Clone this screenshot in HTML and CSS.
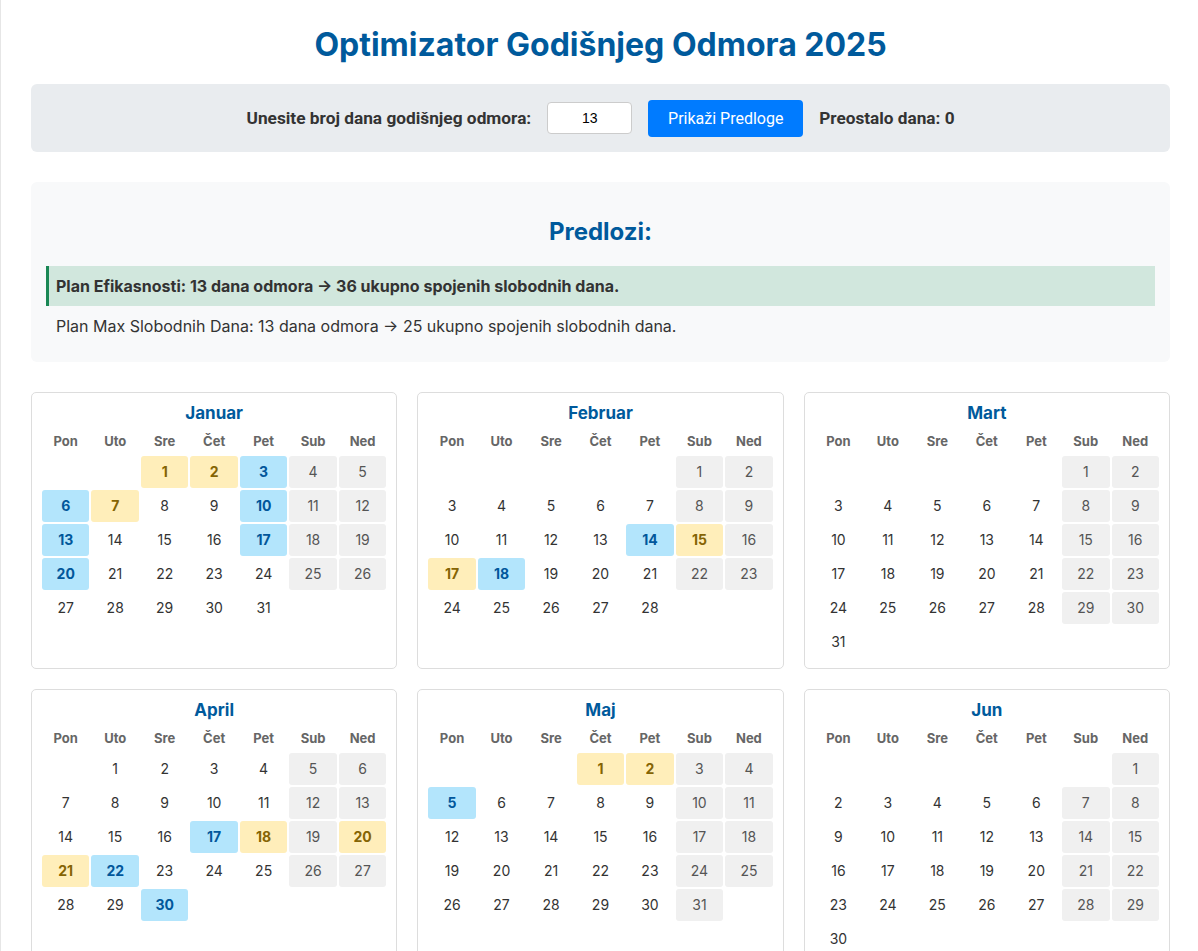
FILE: index.html
```html
<!DOCTYPE html>
<html lang="sr">
<head>
<meta charset="utf-8">
<title>Optimizator Godišnjeg Odmora 2025</title>
<link rel="stylesheet" href="styles.css">
</head>
<body>
<div class="page">
  <h1 class="title">Optimizator Godišnjeg Odmora 2025</h1>
  <div class="controls">
    <label class="controls-label" for="days">Unesite broj dana godišnjeg odmora:</label>
    <input id="days" class="days-input" type="number" value="13">
    <button class="btn">Prikaži Predloge</button>
    <span class="remaining">Preostalo dana: 0</span>
  </div>
  <div class="suggestions">
    <h2 class="suggestions-title">Predlozi:</h2>
    <p class="plan plan-active">Plan Efikasnosti: 13 dana odmora → 36 ukupno spojenih slobodnih dana.</p>
    <p class="plan">Plan Max Slobodnih Dana: 13 dana odmora → 25 ukupno spojenih slobodnih dana.</p>
  </div>
  <div class="calendars" id="calendars"></div>
</div>
<script src="script.js"></script>
</body>
</html>
```
FILE: styles.css
```css
* { box-sizing: border-box; }
body {
  margin: 0;
  font-family: Inter, "Noto Sans", sans-serif;
  color: #333;
  background: #fff;
  border-left: 1px solid #e6e6e6;
  min-height: 100vh;
}
.page {
  padding: 25px 28px 20px 30px;
}
.title {
  margin: 0 0 20px;
  text-align: center;
  font-size: 32px;
  line-height: 39px;
  font-weight: 700;
  color: #005a9c;
}
.controls {
  display: flex;
  justify-content: center;
  align-items: center;
  gap: 16px;
  background: #e9ecef;
  border-radius: 6px;
  padding: 15px;
  min-height: 68px;
  font-family: Roboto, "Liberation Sans", sans-serif;
}
.controls-label {
  font-weight: 700;
  font-size: 17.3px;
  color: #333;
}
.days-input {
  width: 85px;
  height: 32px;
  border: 1px solid #ccc;
  border-radius: 4px;
  text-align: center;
  font-family: "Liberation Sans", Arial, sans-serif;
  font-size: 14px;
  color: #000;
  background: #fff;
  -moz-appearance: textfield;
}
.days-input::-webkit-outer-spin-button,
.days-input::-webkit-inner-spin-button { -webkit-appearance: none; margin: 0; }
.btn {
  background: #007bff;
  color: #fff;
  border: none;
  border-radius: 4px;
  padding: 10px 0;
  font-family: Roboto, "Liberation Sans", sans-serif;
  font-size: 16px;
  line-height: 17px;
  width: 155px;
  white-space: nowrap;
  text-align: center;
}
.remaining {
  font-weight: 700;
  font-size: 17.2px;
  color: #333;
}
.suggestions {
  margin-top: 30px;
  background: #f8f9fa;
  border-radius: 6px;
  padding: 15px 15px 16px;
}
.suggestions-title {
  margin: 20px 0 20px;
  text-align: center;
  font-size: 24px;
  line-height: 29px;
  color: #005a9c;
}
.plan {
  margin: 0;
  padding: 10px;
  font-size: 16px;
  line-height: 20px;
  color: #333;
}
.plan-active {
  font-weight: 700;
  background: #d1e7dd;
  border-left: 3px solid #198754;
  padding-left: 7px;
}
.calendars {
  margin-top: 30px;
  display: grid;
  grid-template-columns: repeat(3, 1fr);
  gap: 20px 20px;
}
.month {
  border: 1px solid #ddd;
  border-radius: 5px;
  padding: 10px;
  background: #fff;
}
.month-name {
  margin: 0 0 8px;
  text-align: center;
  font-size: 17px;
  line-height: 20px;
  font-weight: 700;
  color: #005a9c;
}
.weekdays, .days {
  display: grid;
  grid-template-columns: repeat(7, 1fr);
  gap: 2px;
}
.weekdays {
  margin-bottom: 5px;
}
.weekday {
  text-align: center;
  font-size: 13px;
  line-height: 20px;
  font-weight: 700;
  color: #666;
}
.day {
  height: 32px;
  line-height: 32px;
  text-align: center;
  font-size: 14px;
  border-radius: 3px;
  color: #333;
}
.day.weekend { background: #f0f0f0; color: #555; }
.day.holiday { background: #ffeeba; color: #856404; font-weight: 700; }
.day.vacation { background: #b3e5fc; color: #01579b; font-weight: 700; }
```
FILE: script.js
```js
(function () {
  var months = ["Januar","Februar","Mart","April","Maj","Jun","Jul","Avgust","Septembar","Oktobar","Novembar","Decembar"];
  var wd = ["Pon","Uto","Sre","Čet","Pet","Sub","Ned"];
  var holidays = {0:[1,2,7],1:[15,17],3:[18,20,21],4:[1,2]};
  var vacation = {0:[3,6,10,13,17,20],1:[14,18],3:[17,22,30],4:[5]};
  var root = document.getElementById("calendars");
  var html = "";
  for (var m = 0; m < 12; m++) {
    html += '<div class="month"><h3 class="month-name">' + months[m] + '</h3><div class="weekdays">';
    for (var i = 0; i < 7; i++) html += '<div class="weekday">' + wd[i] + '</div>';
    html += '</div><div class="days">';
    var first = new Date(2025, m, 1).getDay();
    var offset = (first + 6) % 7;
    var count = new Date(2025, m + 1, 0).getDate();
    for (var e = 0; e < offset; e++) html += '<div class="day empty"></div>';
    for (var d = 1; d <= count; d++) {
      var dow = (offset + d - 1) % 7;
      var cls = "day";
      if ((holidays[m] || []).indexOf(d) >= 0) cls += " holiday";
      else if ((vacation[m] || []).indexOf(d) >= 0) cls += " vacation";
      else if (dow >= 5) cls += " weekend";
      html += '<div class="' + cls + '">' + d + '</div>';
    }
    html += '</div></div>';
  }
  root.innerHTML = html;
})();
```
